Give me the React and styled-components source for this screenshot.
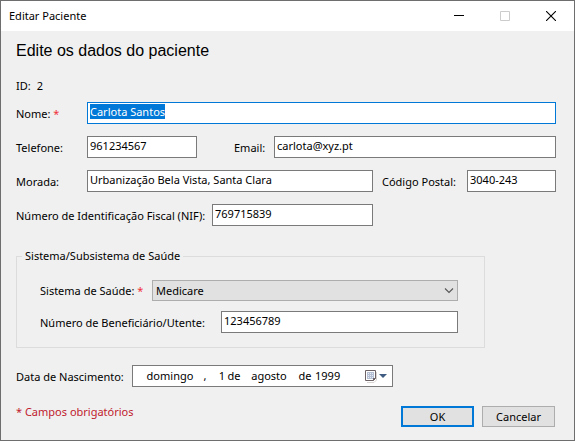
import React, { useEffect, useRef } from "react";
import styled, { createGlobalStyle } from "styled-components";

const GlobalStyle = createGlobalStyle`
  *, *::before, *::after { box-sizing: border-box; }
  body {
    margin: 0;
    background: #6e6e6e;
    font: 11px/14px "Noto Sans", "Open Sans", sans-serif;
    color: #000;
  }
  input, select, button { font: inherit; color: inherit; }
`;

const Dialog = styled.main`
  display: flex;
  flex-direction: column;
  min-height: 100vh;
  border: 1px solid #6e6e6e;
  background: #f0f0f0;
`;

const TitleBar = styled.header`
  display: flex;
  align-items: center;
  height: 30px;
  padding-left: 8px;
  background: #fff;
`;

const WindowTitle = styled.h1`
  flex: 1;
  margin: 0;
  font-size: 11px;
  font-weight: 400;
`;

const WindowButton = styled.button`
  display: grid;
  place-items: center;
  width: 46px;
  height: 28px;
  padding: 0;
  border: 0;
  background: transparent;
  color: ${({ disabled }) => (disabled ? "#ccc" : "#000")};
`;

const Form = styled.form`
  padding: 10px 18px 13px 15px;
`;

const Heading = styled.h2`
  margin: 0 0 18px;
  font: 400 16px/20px "Liberation Sans", Arial, sans-serif;
`;

const Identifier = styled.div`
  display: flex;
  gap: 6px;
  margin-bottom: 9px;
`;

const Rows = styled.div`
  display: flex;
  flex-direction: column;
  gap: ${({ $gap }) => $gap}px;
`;

const Row = styled.div`
  display: flex;
  align-items: center;
`;

const Label = styled.label`
  flex: none;
  width: ${({ $width }) => $width}px;
  padding-top: 1px;
  padding-left: ${({ $indent }) => $indent || 0}px;
  white-space: nowrap;
`;

const Required = styled.span`
  color: #f0303c;
`;

const TextField = styled.input`
  flex: ${({ $width }) => ($width ? `0 0 ${$width}px` : "1")};
  min-width: 0;
  width: 0;
  height: 22px;
  padding: 1px 2px 4px;
  border: 1px solid #7a7a7a;
  border-radius: 0;
  outline: 0;
  background: #fff;
  &:focus { border-color: #0078d7; }
  &::selection { background: #0078d7; color: #fff; }
`;

const Group = styled.fieldset`
  margin: 22px 71px 17px 0;
  padding: 16px 26px 14px 23px;
  border: 1px solid #dcdcdc;
`;

const Legend = styled.legend`
  margin-left: -18px;
  padding: 0 3px;
  line-height: 16px;
`;

const SelectBox = styled.div`
  display: grid;
  flex: 1;
  align-items: center;
  & > * { grid-area: 1 / 1; }
  & > svg { justify-self: end; margin-right: 4px; pointer-events: none; }
`;

const Select = styled.select`
  appearance: none;
  width: 100%;
  height: 21px;
  padding: 0 20px 0 3px;
  border: 1px solid #adadad;
  border-radius: 0;
  background: #e1e1e1;
`;

const DateBox = styled.div`
  display: flex;
  align-items: center;
  width: 261px;
  height: 22px;
  padding: 0 5px 0 10px;
  border: 1px solid #7a7a7a;
  background: #fff;
`;

const DatePart = styled.input`
  width: ${({ $width }) => $width}px;
  height: 14px;
  padding: 0;
  border: 0;
  outline: 0;
  background: transparent;
  text-align: ${({ $align }) => $align || "center"};
`;

const Separator = styled.span`
  flex: none;
  width: ${({ $width }) => $width}px;
  height: 14px;
  text-align: center;
`;

const CalendarButton = styled.button`
  display: flex;
  align-items: center;
  gap: 2px;
  margin-left: auto;
  padding: 0;
  border: 0;
  background: transparent;
`;

const Footer = styled.footer`
  display: flex;
  align-items: flex-end;
  gap: 8px;
  margin: 18px 1px 0 0;
`;

const Note = styled.p`
  flex: 1;
  align-self: center;
  margin: 0 0 8px;
  color: #c01a2c;
`;

const ActionButton = styled.button`
  width: 73px;
  height: 21px;
  padding: 0;
  border: ${({ $primary }) => ($primary ? "2px solid #0078d7" : "1px solid #adadad")};
  background: #e1e1e1;
`;

function CalendarIcon() {
  return (
    <svg width="12" height="14" viewBox="0 0 12 14" aria-hidden="true">
      <path d="M2 13.5h7l2.5-2.5V3" fill="none" stroke="#d8d4d2" />
      <path d="M.5 1.5h10v8l-2 2h-8z" fill="#fff" stroke="#6d6366" />
      <path d="M2 3h7v7H2z" fill="#e6ebf4" />
      <path d="M2 3.5h7M2 5.5h7M2 7.5h7M2 9.5h7M2.5 3v7M4.5 3v7M6.5 3v7M8.5 3v7" stroke="#b4bfd3" />
      <path d="M8 12V9h3z" fill="#6d6366" />
    </svg>
  );
}

export default function App() {
  const nameRef = useRef(null);

  useEffect(() => {
    nameRef.current.focus();
    nameRef.current.select();
  }, []);

  return (
    <>
      <GlobalStyle />
      <Dialog>
        <TitleBar>
          <WindowTitle>Editar Paciente</WindowTitle>
          <WindowButton type="button" aria-label="Minimizar">
            <svg width="10" height="10"><path d="M0 4.5h10" stroke="currentColor" /></svg>
          </WindowButton>
          <WindowButton type="button" aria-label="Maximizar" disabled>
            <svg width="10" height="10"><path d="M.5.5h9v9h-9z" fill="none" stroke="currentColor" /></svg>
          </WindowButton>
          <WindowButton type="button" aria-label="Fechar">
            <svg width="10" height="10"><path d="M0 0l10 10M10 0L0 10" stroke="currentColor" strokeWidth="1.1" /></svg>
          </WindowButton>
        </TitleBar>

        <Form onSubmit={(event) => event.preventDefault()}>
          <Heading>Edite os dados do paciente</Heading>
          <Identifier><span>ID:</span><span>2</span></Identifier>

          <Rows $gap={12}>
            <Row>
              <Label htmlFor="nome" $width={71}>Nome: <Required>*</Required></Label>
              <TextField id="nome" ref={nameRef} defaultValue="Carlota Santos" required />
            </Row>
            <Row>
              <Label htmlFor="telefone" $width={71}>Telefone:</Label>
              <TextField id="telefone" type="tel" $width={110} defaultValue="961234567" />
              <Label htmlFor="email" $width={77} $indent={37}>Email:</Label>
              <TextField id="email" defaultValue="carlota@xyz.pt" />
            </Row>
            <Row>
              <Label htmlFor="morada" $width={71}>Morada:</Label>
              <TextField id="morada" defaultValue="Urbanização Bela Vista, Santa Clara" />
              <Label htmlFor="postal" $width={94} $indent={9}>Código Postal:</Label>
              <TextField id="postal" $width={89} defaultValue="3040-243" />
            </Row>
            <Row>
              <Label htmlFor="nif" $width={196}>Número de Identificação Fiscal (NIF):</Label>
              <TextField id="nif" $width={161} defaultValue="769715839" />
            </Row>
          </Rows>

          <Group>
            <Legend>Sistema/Subsistema de Saúde</Legend>
            <Rows $gap={10}>
              <Row>
                <Label htmlFor="sistema" $width={112}>Sistema de Saúde: <Required>*</Required></Label>
                <SelectBox>
                  <Select id="sistema" required><option>Medicare</option></Select>
                  <svg width="10" height="6"><path d="M1 .5l4 4 4-4" fill="none" stroke="#555" strokeWidth="1.1" /></svg>
                </SelectBox>
              </Row>
              <Row>
                <Label htmlFor="utente" $width={181}>Número de Beneficiário/Utente:</Label>
                <TextField id="utente" defaultValue="123456789" />
              </Row>
            </Rows>
          </Group>

          <Row>
            <Label htmlFor="dia" $width={116}>Data de Nascimento:</Label>
            <DateBox role="group" aria-label="Data de Nascimento">
              <DatePart aria-label="Dia da semana" $width={54} defaultValue="domingo" />
              <Separator $width={16}>,</Separator>
              <DatePart id="dia" $width={12} $align="right" defaultValue="1" />
              <Separator $width={18}>de</Separator>
              <DatePart aria-label="Mês" $width={52} defaultValue="agosto" />
              <Separator $width={20}>de</Separator>
              <DatePart aria-label="Ano" $width={28} $align="left" defaultValue="1999" />
              <CalendarButton type="button" aria-label="Abrir calendário">
                <CalendarIcon />
                <svg width="8" height="4"><path d="M0 0h8L4 4z" fill="#3f5b82" /></svg>
              </CalendarButton>
            </DateBox>
          </Row>

          <Footer>
            <Note>* Campos obrigatórios</Note>
            <ActionButton type="submit" $primary>OK</ActionButton>
            <ActionButton type="button">Cancelar</ActionButton>
          </Footer>
        </Form>
      </Dialog>
    </>
  );
}
